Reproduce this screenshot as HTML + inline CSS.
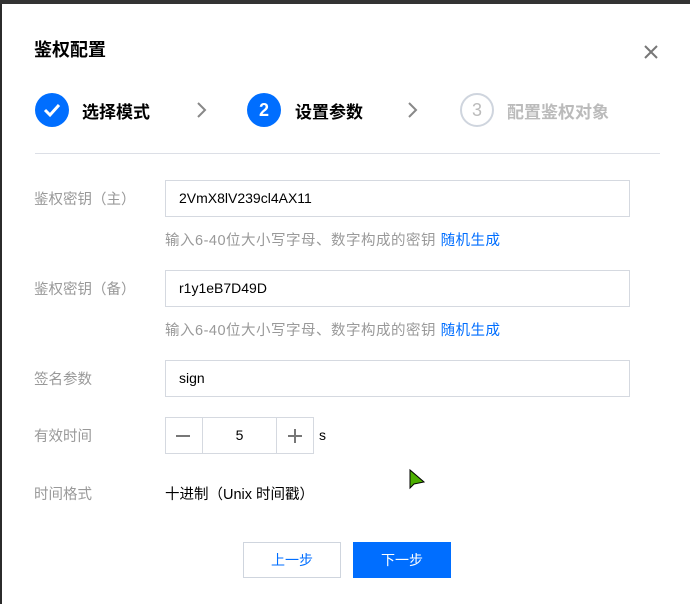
<!DOCTYPE html>
<html><head><meta charset="utf-8"><style>
*{margin:0;padding:0;box-sizing:border-box}
body{width:690px;height:604px;background:#2b2b2b;position:relative;overflow:hidden;font-family:"Liberation Sans","Noto Sans CJK SC",sans-serif}
.m{position:absolute;left:2px;top:4px;width:688px;height:600px;background:#fff}
.a{position:absolute}
.t{left:34px;top:36px;font-size:18px;font-weight:bold;color:#000}
.c{width:34px;height:34px;border-radius:50%;top:93px;text-align:center;line-height:34px;font-size:18px;font-weight:bold}
.st{top:98px;font-size:17px;font-weight:bold}
.lb{left:34px;font-size:14.5px;color:#999}
.in{left:165px;width:465px;height:37px;border:1px solid #d5d9e0;font-size:14px;color:#000;padding-left:13px;line-height:35px}
.h{left:165px;font-size:14.5px;color:#999;white-space:nowrap;letter-spacing:0.5px}
.h b{color:#006eff;font-weight:normal}
.btn{top:542px;width:98px;height:36px;text-align:center;line-height:34px;font-size:14px}
</style></head><body>
<div class="a" style="left:0;top:0;width:690px;height:4px;background:#333"></div>
<div class="m"></div>
<div class="a t">鉴权配置</div>
<svg class="a" style="left:643px;top:44px" width="16" height="16"><path d="M2 2L14 14M14 2L2 14" stroke="#777" stroke-width="2"/></svg>
<div class="a c" style="left:35px;background:#006eff"><svg width="34" height="34"><path d="M10 17l5 5 9-10" stroke="#fff" stroke-width="3" fill="none"/></svg></div>
<div class="a st" style="left:82px;color:#000">选择模式</div>
<svg class="a" style="left:196px;top:101px" width="12" height="18"><path d="M2 2l7 7-7 7" stroke="#888" stroke-width="2" fill="none"/></svg>
<div class="a c" style="left:247px;background:#006eff;color:#fff">2</div>
<div class="a st" style="left:295px;color:#000">设置参数</div>
<svg class="a" style="left:407px;top:101px" width="12" height="18"><path d="M2 2l7 7-7 7" stroke="#888" stroke-width="2" fill="none"/></svg>
<div class="a c" style="left:460px;border:2px solid #cfd5de;color:#bbb;font-weight:normal;line-height:30px">3</div>
<div class="a st" style="left:507px;color:#bbb">配置鉴权对象</div>
<div class="a" style="left:35px;top:153px;width:625px;height:1px;background:#dcdfe6"></div>

<div class="a lb" style="top:188px">鉴权密钥（主）</div>
<div class="a in" style="top:180px">2VmX8lV239cl4AX11</div>
<div class="a h" style="top:229px">输入6-40位大小写字母、数字构成的密钥 <b>随机生成</b></div>
<div class="a lb" style="top:278px">鉴权密钥（备）</div>
<div class="a in" style="top:270px">r1y1eB7D49D</div>
<div class="a h" style="top:319px">输入6-40位大小写字母、数字构成的密钥 <b>随机生成</b></div>
<div class="a lb" style="top:368px">签名参数</div>
<div class="a in" style="top:360px">sign</div>
<div class="a lb" style="top:425px">有效时间</div>
<div class="a" style="left:165px;top:417px;width:149px;height:37px;border:1px solid #d5d9e0"></div>
<div class="a" style="left:202px;top:417px;width:1px;height:37px;background:#d5d9e0"></div>
<div class="a" style="left:276px;top:417px;width:1px;height:37px;background:#d5d9e0"></div>
<div class="a" style="left:176px;top:435px;width:14px;height:2px;background:#777"></div>
<div class="a" style="left:288px;top:435px;width:14px;height:2px;background:#777"></div>
<div class="a" style="left:294px;top:429px;width:2px;height:14px;background:#777"></div>
<div class="a" style="left:203px;top:427px;width:73px;text-align:center;font-size:14px">5</div>
<div class="a" style="left:319px;top:427px;font-size:14px">s</div>
<div class="a lb" style="top:483px">时间格式</div>
<div class="a" style="left:165px;top:483px;font-size:14.5px;color:#000">十进制（Unix 时间戳）</div>
<svg class="a" style="left:408px;top:468px" width="20" height="24"><path d="M2 2L2 20 6 16 16 14Z" fill="#4caf00" stroke="#000" stroke-width="1"/></svg>
<div class="a btn" style="left:243px;border:1px solid #cfd5de;color:#006eff">上一步</div>
<div class="a btn" style="left:353px;background:#006eff;color:#fff;line-height:36px">下一步</div>
</body></html>
